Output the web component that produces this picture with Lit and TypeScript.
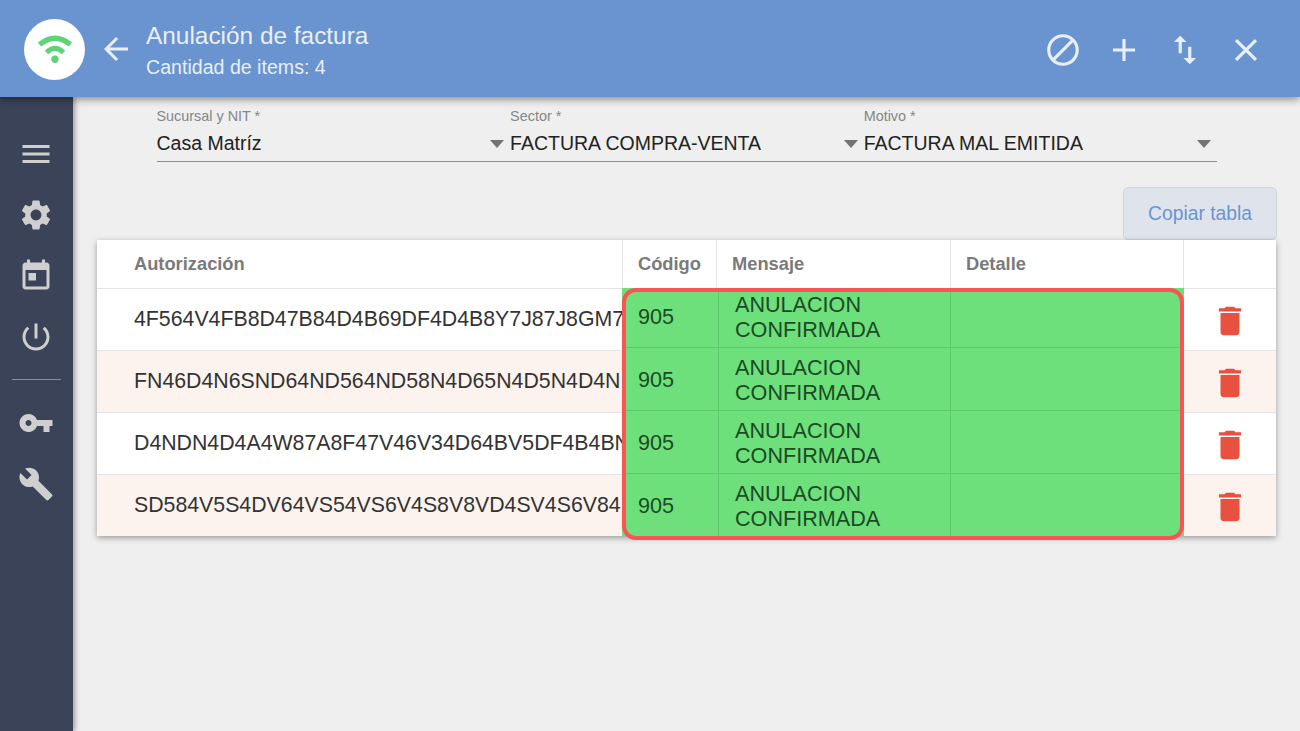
import { LitElement, html, css, svg } from "lit";
import { customElement } from "lit/decorators.js";

const icon = (d: string, size = 36, fill = "currentColor") => html`<svg width=${size} height=${size} viewBox="0 0 24 24" fill=${fill}>${svg`<path d=${d}></path>`}</svg>`;

const P = {
  back: "M20 11H7.83l5.59-5.59L12 4l-8 8 8 8 1.41-1.41L7.83 13H20v-2z",
  block: "M12 2C6.48 2 2 6.48 2 12s4.48 10 10 10 10-4.48 10-10S17.52 2 12 2zM4 12c0-4.42 3.58-8 8-8 1.85 0 3.55.63 4.9 1.69L5.69 16.9C4.63 15.55 4 13.85 4 12zm8 8c-1.85 0-3.55-.63-4.9-1.69L18.31 7.1C19.37 8.45 20 10.15 20 12c0 4.42-3.58 8-8 8z",
  plus: "M19 13h-6v6h-2v-6H5v-2h6V5h2v6h6v2z",
  swap: "M16 17.01V10h-2v7.01h-3L15 21l4-3.99h-3zM9 3 5 6.99h3V14h2V6.99h3L9 3z",
  close: "M19 6.41 17.59 5 12 10.59 6.41 5 5 6.41 10.59 12 5 17.59 6.41 19 12 13.41 17.59 19 19 17.59 13.41 12z",
  menu: "M3 18h18v-2H3v2zm0-5h18v-2H3v2zm0-7v2h18V6H3z",
  gear: "M19.14 12.94c.04-.3.06-.61.06-.94 0-.32-.02-.64-.07-.94l2.03-1.58c.18-.14.23-.41.12-.61l-1.92-3.32c-.12-.22-.37-.29-.59-.22l-2.39.96c-.5-.38-1.03-.7-1.62-.94l-.36-2.54c-.04-.24-.24-.41-.48-.41h-3.84c-.24 0-.43.17-.47.41l-.36 2.54c-.59.24-1.13.57-1.62.94l-2.39-.96c-.22-.08-.47 0-.59.22L2.74 8.87c-.12.21-.08.47.12.61l2.03 1.58c-.05.3-.09.63-.09.94s.02.64.07.94l-2.03 1.58c-.18.14-.23.41-.12.61l1.92 3.32c.12.22.37.29.59.22l2.39-.96c.5.38 1.03.7 1.62.94l.36 2.54c.05.24.24.41.48.41h3.84c.24 0 .44-.17.47-.41l.36-2.54c.59-.24 1.13-.56 1.62-.94l2.39.96c.22.08.47 0 .59-.22l1.92-3.32c.12-.22.07-.47-.12-.61l-2.01-1.58zM12 15.6c-1.98 0-3.6-1.62-3.6-3.6s1.62-3.6 3.6-3.6 3.6 1.62 3.6 3.6-1.62 3.6-3.6 3.6z",
  cal: "M19 3h-1V1h-2v2H8V1H6v2H5c-1.11 0-1.99.9-1.99 2L3 19c0 1.1.89 2 2 2h14c1.1 0 2-.9 2-2V5c0-1.1-.9-2-2-2zm0 16H5V8h14v11zM7 10h5v5H7z",
  power: "M13 3h-2v10h2V3zm4.83 2.17-1.42 1.42C17.99 7.86 19 9.81 19 12c0 3.87-3.13 7-7 7s-7-3.13-7-7c0-2.19 1.01-4.14 2.58-5.42L6.17 5.17C4.23 6.82 3 9.26 3 12c0 4.97 4.03 9 9 9s9-4.03 9-9c0-2.74-1.23-5.18-3.17-6.83z",
  key: "M12.65 10C11.83 7.67 9.61 6 7 6c-3.31 0-6 2.69-6 6s2.69 6 6 6c2.61 0 4.83-1.67 5.65-4H17v4h4v-4h2v-4H12.65zM7 14c-1.1 0-2-.9-2-2s.9-2 2-2 2 .9 2 2-.9 2-2 2z",
  wrench: "M22.7 19 13.6 9.9c.9-2.3.4-5-1.5-6.9-2-2-5-2.4-7.4-1.3L9 6 6 9 1.6 4.7C.4 7.1.9 10.1 2.9 12.1c1.9 1.9 4.6 2.4 6.9 1.5l9.1 9.1c.4.4 1 .4 1.4 0l2.3-2.3c.5-.4.5-1.1.1-1.4z",
  trash: "M6 19c0 1.1.9 2 2 2h8c1.1 0 2-.9 2-2V7H6v12zM19 4h-3.5l-1-1h-5l-1 1H5v2h14V4z",
};

const wifi = html`<svg width="36" height="28" viewBox="0 0 36 28" fill="none" stroke="#5fd27a">
  ${svg`<path d="M2.5 9.5 Q18 -3 33.5 9.5" stroke-width="5.4"></path>
  <path d="M9.5 17.5 Q18 9.4 26.5 17.5" stroke-width="5"></path>
  <circle cx="18" cy="24.3" r="3.7" fill="#5fd27a" stroke="none"></circle>`}
</svg>`;

const rows = [
  "4F564V4FB8D47B84D4B69DF4D4B8Y7J87J8GM7",
  "FN46D4N6SND64ND564ND58N4D65N4D5N4D4N",
  "D4NDN4D4A4W87A8F47V46V34D64BV5DF4B4BN",
  "SD584V5S4DV64VS54VS6V4S8V8VD4SV4S6V84",
];

@customElement("app-root")
export class AppRoot extends LitElement {
  static styles = css`
    :host { display: block; width: 1300px; height: 731px; overflow: hidden; background: #efefef; font-family: "Liberation Sans", Arial, sans-serif; }
    .top { height: 97px; background: #6a94d0; color: #e8eff9; display: flex; align-items: center; padding: 1px 35px 0 24px; position: relative; z-index: 2; box-shadow: 0 2px 8px rgba(0,0,0,.45); box-sizing: border-box; }
    .logo { width: 61px; height: 61px; border-radius: 50%; background: #fff; display: flex; align-items: center; justify-content: center; flex: none; }
    .back { display: flex; margin-left: 13px; margin-right: 12px; }
    .titles { display: flex; flex-direction: column; flex: 1; }
    .t1 { font-size: 24.4px; line-height: 32px; margin-top: 1px; white-space: nowrap; }
    .t2 { font-size: 19.6px; line-height: 24px; margin-top: 3px; white-space: nowrap; color: #e8eff9; }
    .actions { display: flex; gap: 23px; margin-top: 1px; }
    .actions svg { display: block; }
    .body { display: flex; height: 634px; }
    .side { width: 73px; background: #3a4358; color: #cfcfcf; box-shadow: 2px 0 5px rgba(0,0,0,.35); display: flex; flex-direction: column; align-items: center; padding: 39px 1px 0 0; box-sizing: border-box; flex: none; position: relative; z-index: 1; }
    .side svg { display: block; margin-bottom: 25px; }
    .side hr { width: 49px; border: 0; border-top: 1px solid #8a8f9c; margin: -1px 0 25px; }
    .main { flex: 1; display: flex; flex-direction: column; padding: 0 24px; min-width: 0; }
    .filters { display: grid; grid-template-columns: repeat(3, 353.6px); margin: 8px 0 0 59.5px; border-bottom: 1px solid #8c8c8c; height: 57px; box-sizing: border-box; width: 1060.5px; }
    .f { position: relative; }
    .f label { display: block; font-size: 14.4px; line-height: 20px; color: #868686; margin-top: 1px; }
    .f .v { font-size: 19.5px; line-height: 28px; margin-top: 3px; color: #222; white-space: nowrap; }
    .f .caret { position: absolute; right: 6px; top: 35px; width: 0; height: 0; border: 7.5px solid transparent; border-top: 8px solid #737373; border-bottom: 0; }
    .tools { display: flex; justify-content: flex-end; margin: 25px -1px 0 0; }
    .copy { width: 154px; height: 53px; box-sizing: border-box; border: 1px solid #cdd5e0; border-radius: 5px; background: #dfe4ec; color: #6a94d0; font: inherit; font-size: 19.3px; padding: 0; }
    .table { position: relative; background: #fff; box-shadow: 0 2px 6px rgba(0,0,0,.35); width: 1179px; height: 296px; }
    .r { display: grid; grid-template-columns: 525px 94px 234px 233px 93px; height: 62px; box-sizing: border-box; border-top: 1px solid #e4e4e4; }
    .r.h { height: 48px; border-top: 0; font-size: 18.3px; font-weight: 700; color: #7a7a7a; }
    .r.alt { background: #fdf3ee; }
    .r > div { display: flex; align-items: center; min-width: 0; overflow: hidden; white-space: nowrap; box-sizing: border-box; }
    .r.h > div + div { border-left: 1px solid #e4e4e4; }
    .r.h > div { padding-left: 15px; }
    .r.h > div:first-child { padding-left: 37px; }
    .r .auth { font-size: 21.3px; color: #333; padding-left: 37px; }
    .r .del { justify-content: center; color: #e8503f; padding-top: 2px; }
    .r .del svg { display: block; }
    .over { position: absolute; left: 525px; top: 48px; width: 562px; height: 248px; background: #6de07c; color: #1d4a24; overflow: hidden; }
    .grid { margin-top: -3px; display: grid; grid-auto-rows: 63px; }
    .frame { position: absolute; left: 525px; top: 48px; width: 562px; height: 252px; box-sizing: border-box; border: 4px solid #fa5456; border-radius: 14px; pointer-events: none; }
    .o { display: grid; grid-template-columns: 96px 232px 234px; font-size: 21.6px; line-height: 25px; box-sizing: border-box; border-bottom: 1px solid #5dc96c; }
    .o > div { display: flex; align-items: center; }
    .o > div + div { border-left: 1px solid #5dc96c; }
    .o .code { padding-left: 16px; }
    .o .msg { padding: 1px 0 0 16px; }
  `;

  render() {
    return html`
      <div class="top">
        <div class="logo">${wifi}</div>
        <div class="back">${icon(P.back, 36)}</div>
        <div class="titles">
          <div class="t1">Anulación de factura</div>
          <div class="t2">Cantidad de items: 4</div>
        </div>
        <div class="actions">
          ${icon(P.block, 38)}${icon(P.plus, 38)}${icon(P.swap, 38)}${icon(P.close, 38)}
        </div>
      </div>
      <div class="body">
        <div class="side">
          ${icon(P.menu)}${icon(P.gear)}${icon(P.cal)}${icon(P.power)}
          <hr />
          ${icon(P.key)}${icon(P.wrench)}
        </div>
        <div class="main">
          <div class="filters">
            <div class="f"><label>Sucursal y NIT *</label><div class="v">Casa Matríz</div><span class="caret"></span></div>
            <div class="f"><label>Sector *</label><div class="v">FACTURA COMPRA-VENTA</div><span class="caret"></span></div>
            <div class="f"><label>Motivo *</label><div class="v">FACTURA MAL EMITIDA</div><span class="caret"></span></div>
          </div>
          <div class="tools"><button class="copy">Copiar tabla</button></div>
          <div class="table">
            <div class="r h"><div>Autorización</div><div>Código</div><div>Mensaje</div><div>Detalle</div><div></div></div>
            ${rows.map((a, i) => html`<div class="r ${i % 2 ? "alt" : ""}"><div class="auth">${a}</div><div></div><div></div><div></div><div class="del">${icon(P.trash, 38)}</div></div>`)}
            <div class="over">
              <div class="grid">
                ${rows.map(() => html`<div class="o"><div class="code">905</div><div class="msg">ANULACION<br />CONFIRMADA</div><div></div></div>`)}
              </div>
            </div>
            <div class="frame"></div>
          </div>
        </div>
      </div>
    `;
  }
}
